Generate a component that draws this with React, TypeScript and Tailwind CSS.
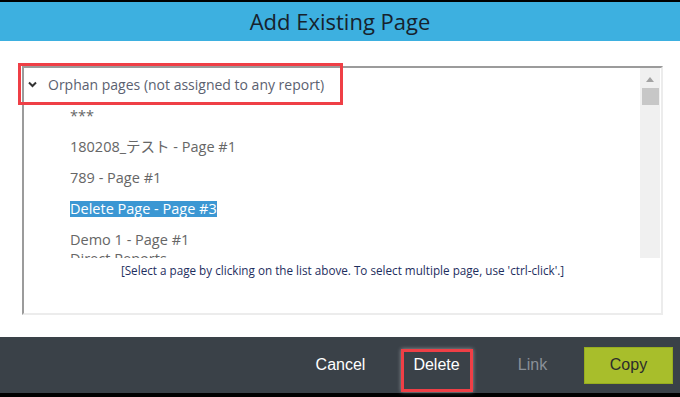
import React from 'react';

const pages = [
  '***',
  '180208_テスト - Page #1',
  '789 - Page #1',
  'Delete Page - Page #3',
  'Demo 1 - Page #1',
];

const uiFont = { fontFamily: '"Open Sans", "Noto Sans CJK JP", sans-serif' };

export default function App() {
  return (
    <div className="w-[680px] h-[397px] flex flex-col bg-black overflow-hidden" style={uiFont}>
      <div className="mt-[2px] h-[39px] bg-[#3db0e0] flex items-center justify-center text-[22px] text-[#17222d]">
        Add Existing Page
      </div>

      <div className="relative flex-1 bg-white pt-[25px] pl-[22px]">
        <div className="w-[641px] h-[249px] border-2 border-t-[#9b9b9b] border-l-[#9b9b9b] border-r-[#ececec] border-b-[#ececec]">
          <div className="flex h-[190px]">
            <div className="flex-1 overflow-hidden">
              <div className="h-[32px] flex items-center pl-[4px] text-[14px] text-[#5b6170]">
                <svg width="9" height="7" viewBox="0 0 9 7" className="mr-[11px]">
                  <polyline points="1,1.5 4.5,5 8,1.5" fill="none" stroke="#333" strokeWidth="2" />
                </svg>
                Orphan pages (not assigned to any report)
              </div>
              {pages.map((p) => (
                <div key={p} className="h-[31px] flex items-center pl-[46px] text-[14.5px] text-[#666]">
                  {p === 'Delete Page - Page #3' ? (
                    <span className="bg-[#3b97d3] text-white leading-[16px]">{p}</span>
                  ) : (
                    p
                  )}
                </div>
              ))}
              <div className="-mt-[3px] pl-[46px] text-[14.5px] text-[#666] leading-[14px]">Direct Reports</div>
            </div>
            <div className="w-[20px] mr-[1px] bg-[#f0f0f0] flex flex-col items-center">
              <svg width="8" height="5" viewBox="0 0 8 5" className="mt-[9px]">
                <polygon points="0,5 4,0 8,5" fill="#a3a3a3" />
              </svg>
              <div className="mt-[6px] w-[17px] h-[17px] bg-[#c7c7c7]" />
            </div>
          </div>
          <div className="mt-[4px] text-center text-[11.7px] text-[#1e2e5e]">
            [Select a page by clicking on the list above. To select multiple page, use 'ctrl-click'.]
          </div>
        </div>

        <div className="absolute left-[18px] top-[22px] w-[325px] h-[42px] border-[3px] border-[#ef3f46]" />
      </div>

      <div className="mb-[4px] h-[56px] bg-[#3a4148] flex items-center justify-end gap-[7px] pr-[7px] text-[16px]" style={{ fontFamily: '"Liberation Sans", Arial, sans-serif' }}>
        <div className="w-[89px] h-[37px] flex items-center justify-center text-white">Cancel</div>
        <div className="relative w-[89px] h-[37px] flex items-center justify-center text-white">
          Delete
          <div className="absolute left-[9px] top-[2px] w-[72px] h-[43px] border-[3px] border-[#ef3f46] shadow-[0_0_4px_rgba(255,255,255,0.45)]" />
        </div>
        <div className="w-[89px] h-[37px] flex items-center justify-center text-[#8a9098]">Link</div>
        <div className="w-[89px] h-[37px] flex items-center justify-center bg-[#a8be2b] border border-[#97ad1f] text-[#2c2c2c]">Copy</div>
      </div>
    </div>
  );
}
